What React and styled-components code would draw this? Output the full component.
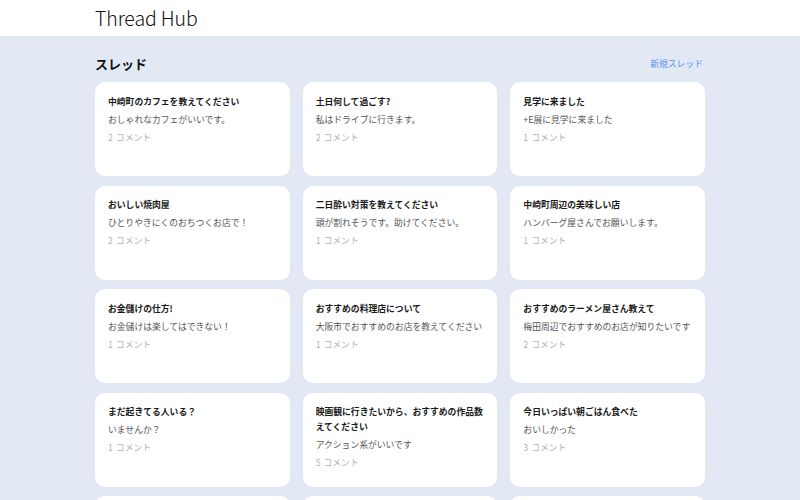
import React from 'react';
import styled, { createGlobalStyle } from 'styled-components';

const GlobalStyle = createGlobalStyle`
    html, body {
        margin: 0;
        padding: 0;
        background-color: #e2e9f4;
    }
    body {
        font-family: "Noto Sans CJK JP", "Noto Sans", sans-serif;
        color: #222;
    }
    * {
        box-sizing: border-box;
    }
`;

const Header = styled.header`
    height: 36px;
    background-color: #fff;
`;

const Inner = styled.div`
    width: 610px;
    margin: 0 auto;
`;

const HeaderInner = styled(Inner)`
    height: 100%;
    display: flex;
    align-items: center;
`;

const Brand = styled.h1`
    margin: 0 0 1px;
    font-size: 19.5px;
    font-weight: 300;
    letter-spacing: -0.1px;
    color: #111;
`;

const Main = styled.main`
    padding-top: 17px;
`;

const SectionHead = styled.div`
    height: 20px;
    display: flex;
    justify-content: space-between;
    align-items: center;
    margin-bottom: 9px;
`;

const H2 = styled.h2`
    margin: 0;
    font-size: 13px;
    font-weight: 700;
    color: #111;
`;

const NewLink = styled.a`
    margin-right: 2px;
    font-size: 8.8px;
    color: #5b8ef0;
    text-decoration: none;
    cursor: pointer;
`;

const Grid = styled.div`
    display: grid;
    grid-template-columns: repeat(3, 1fr);
    column-gap: 13px;
    row-gap: 9.5px;
`;

const Card = styled.article`
    height: 94px;
    padding: 11.5px 13px;
    background-color: #fff;
    border-radius: 10px;
    overflow: hidden;
`;

const Title = styled.h3`
    margin: 0 0 3px;
    font-size: 8.8px;
    line-height: 15px;
    font-weight: 700;
    color: #1a1a1a;
`;

const Body = styled.p`
    margin: 0 0 3px;
    font-size: 8.8px;
    line-height: 15px;
    color: #555;
`;

const Comments = styled.span`
    display: block;
    font-size: 8.8px;
    line-height: 15px;
    color: #b3b3b3;
    word-spacing: 1px;
`;

const threads = [
    { title: '中崎町のカフェを教えてください', body: 'おしゃれなカフェがいいです。', count: 2 },
    { title: '土日何して過ごす?', body: '私はドライブに行きます。', count: 2 },
    { title: '見学に来ました', body: '+E展に見学に来ました', count: 1 },
    { title: 'おいしい焼肉屋', body: 'ひとりやきにくのおちつくお店で！', count: 2 },
    { title: '二日酔い対策を教えてください', body: '頭が割れそうです。助けてください。', count: 1 },
    { title: '中崎町周辺の美味しい店', body: 'ハンバーグ屋さんでお願いします。', count: 1 },
    { title: 'お金儲けの仕方!', body: 'お金儲けは楽してはできない！', count: 1 },
    { title: 'おすすめの料理店について', body: '大阪市でおすすめのお店を教えてください', count: 1 },
    { title: 'おすすめのラーメン屋さん教えて', body: '梅田周辺でおすすめのお店が知りたいです', count: 2 },
    { title: 'まだ起きてる人いる？', body: 'いませんか？', count: 1 },
    { title: '映画観に行きたいから、おすすめの作品数えてください', body: 'アクション系がいいです', count: 5 },
    { title: '今日いっぱい朝ごはん食べた', body: 'おいしかった', count: 3 },
];

const ThreadCard = ({ title, body, count }) => (
    <Card>
        <Title>{title}</Title>
        <Body>{body}</Body>
        <Comments>{count} コメント</Comments>
    </Card>
);

export default function App() {
    return (
        <>
            <GlobalStyle />
            <Header>
                <HeaderInner>
                    <Brand>Thread Hub</Brand>
                </HeaderInner>
            </Header>
            <Main>
                <Inner>
                    <SectionHead>
                        <H2>スレッド</H2>
                        <NewLink>新規スレッド</NewLink>
                    </SectionHead>
                    <Grid>
                        {threads.map((t, i) => (
                            <ThreadCard key={i} {...t} />
                        ))}
                        {/* next row, still loading */}
                        <Card aria-hidden />
                        <Card aria-hidden />
                        <Card aria-hidden />
                    </Grid>
                </Inner>
            </Main>
        </>
    );
}
